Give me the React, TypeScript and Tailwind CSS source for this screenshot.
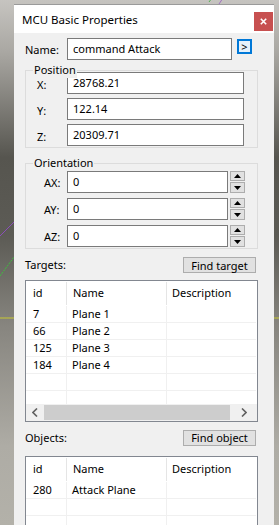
import React from "react";

type Row = { id: string; name: string; desc: string };

const targets: Row[] = [
  { id: "7", name: "Plane 1", desc: "" },
  { id: "66", name: "Plane 2", desc: "" },
  { id: "125", name: "Plane 3", desc: "" },
  { id: "184", name: "Plane 4", desc: "" },
  { id: "", name: "", desc: "" },
  { id: "", name: "", desc: "" },
];

const objects: Row[] = [
  { id: "280", name: "Attack Plane", desc: "" },
  { id: "", name: "", desc: "" },
  { id: "", name: "", desc: "" },
];

function TextBox({ value, width }: { value: string; width: string }) {
  return (
    <div
      className={`${width} h-[22px] shrink-0 border border-[#7a7a7a] bg-white pl-[5px] flex items-center text-black`}
    >
      {value}
    </div>
  );
}

function Spinner() {
  return (
    <div className="ml-[2px] flex flex-col gap-[1px]">
      <div className="w-[15px] h-[10px] border border-[#adadad] bg-[#e1e1e1] flex items-center justify-center">
        <svg width="7" height="4" viewBox="0 0 7 4">
          <path d="M0 4 L3.5 0 L7 4 Z" fill="#000" />
        </svg>
      </div>
      <div className="w-[15px] h-[11px] border border-[#adadad] bg-[#e1e1e1] flex items-center justify-center">
        <svg width="7" height="4" viewBox="0 0 7 4">
          <path d="M0 0 L7 0 L3.5 4 Z" fill="#000" />
        </svg>
      </div>
    </div>
  );
}

function GroupBox({ title, children, cls }: { title: string; children: React.ReactNode; cls: string }) {
  return (
    <div className={`relative border border-[#dcdcdc] ${cls}`}>
      <span className="absolute left-[7px] top-[-9px] bg-[#f0f0f0] px-[1px] leading-[16px]">{title}</span>
      {children}
    </div>
  );
}

function Rows({ rows }: { rows: Row[] }) {
  return (
    <>
      <div className="h-[25px] shrink-0 flex items-center">
        <div className="w-[41px] h-[23px] border-r border-[#e5e5e5] pl-[7px] flex items-center">id</div>
        <div className="w-[100px] h-[23px] border-r border-[#e5e5e5] pl-[6px] flex items-center">Name</div>
        <div className="w-[89px] h-[23px] pl-[5px] flex items-center">Description</div>
      </div>
      <div className="flex-1 overflow-hidden">
        {rows.map((r, i) => (
          <div key={i} className="h-[17px] w-[230px] flex border-b border-[#f0f0f0]">
            <div className="w-[41px] border-r border-[#f0f0f0] pl-[7px] leading-[16px]">{r.id}</div>
            <div className="w-[100px] border-r border-[#f0f0f0] pl-[5px] leading-[16px]">{r.name}</div>
            <div className="w-[89px] pl-[5px] leading-[16px]">{r.desc}</div>
          </div>
        ))}
      </div>
    </>
  );
}

function HScroll() {
  return (
    <div className="h-[17px] shrink-0 bg-[#f0f0f0] flex items-center">
      <div className="w-[17px] h-[17px] flex items-center justify-center">
        <svg width="6" height="9" viewBox="0 0 6 9">
          <path d="M5 0.5 L1 4.5 L5 8.5" stroke="#606060" strokeWidth="1.6" fill="none" />
        </svg>
      </div>
      <div className="ml-[1px] w-[186px] h-[15px] bg-[#cdcdcd]" />
      <div className="flex-1 h-[17px] flex items-center justify-center">
        <svg width="6" height="9" viewBox="0 0 6 9">
          <path d="M1 0.5 L5 4.5 L1 8.5" stroke="#606060" strokeWidth="1.6" fill="none" />
        </svg>
      </div>
    </div>
  );
}

function Backdrop() {
  return (
    <svg className="absolute inset-0" width="279" height="525" viewBox="0 0 279 525">
      <line x1="0" y1="236" x2="14" y2="222" stroke="#8a4fb8" strokeWidth="1" />
      <line x1="0" y1="276" x2="14" y2="257" stroke="#3fbf3f" strokeWidth="1" strokeDasharray="2 1" />
      <line x1="0" y1="318" x2="14" y2="318" stroke="#c8c832" strokeWidth="1" />
      <line x1="274" y1="318" x2="279" y2="318" stroke="#c8c832" strokeWidth="1" />
      <line x1="209" y1="2" x2="212" y2="-2" stroke="#55b055" strokeWidth="1" />
      <line x1="219" y1="4" x2="223" y2="-2" stroke="#a070c0" strokeWidth="1" />
    </svg>
  );
}

export default function App() {
  return (
    <div className="relative w-[279px] h-[525px] overflow-hidden bg-[linear-gradient(180deg,#c6c4c0_0%,#a9a7a2_10%,#56554f_30%,#5c5b55_45%,#87857f_62%,#aeaca5_85%,#b3b1a9_100%)] font-['Noto_Sans',sans-serif] text-[11px] text-black">
      <Backdrop />
      <div className="relative ml-[14px] mt-[4px] w-[260px] h-[521px] border-t border-[#9a9a9a] bg-[#f0f0f0] flex flex-col">
        <div className="h-[28px] shrink-0 bg-white flex justify-between">
          <span className="pl-[8px] pt-[6px] text-[11.5px]">MCU Basic Properties</span>
          <div className="self-end mb-[2px] mr-[1px] w-[19px] h-[19px] bg-[#c75050] flex items-center justify-center">
            <svg width="7" height="7" viewBox="0 0 7 7">
              <path d="M0.8 0.8 L6.2 6.2 M6.2 0.8 L0.8 6.2" stroke="#fff" strokeWidth="1.6" />
            </svg>
          </div>
        </div>

        <div className="pl-[11px] pr-[16px] flex flex-col">
          <div className="mt-[5px] flex items-start">
            <span className="w-[42px] pt-[4px]">Name:</span>
            <TextBox value="command Attack" width="w-[165px]" />
            <div className="ml-[5px] mt-[1px] w-[15px] h-[15px] border-2 border-[#0078d7] bg-[#e5f1fb] flex items-center justify-center text-[11px] leading-none">
              &gt;
            </div>
          </div>

          <GroupBox title="Position" cls="mt-[10px] h-[78px] pt-[1px]">
            <div className="flex flex-col gap-[4px]">
              {[
                ["X:", "28768.21"],
                ["Y:", "122.14"],
                ["Z:", "20309.71"],
              ].map(([l, v]) => (
                <div key={l} className="flex items-center">
                  <span className="w-[41px] pl-[11px] pt-[5px]">{l}</span>
                  <TextBox value={v} width="w-[177px]" />
                </div>
              ))}
            </div>
          </GroupBox>

          <GroupBox title="Orientation" cls="mt-[15px] h-[86px] pt-[7px]">
            <div className="flex flex-col gap-[5px]">
              {["AX:", "AY:", "AZ:"].map((l) => (
                <div key={l} className="flex items-start">
                  <span className="w-[41px] pl-[18px] pt-[4px]">{l}</span>
                  <TextBox value="0" width="w-[161px]" />
                  <Spinner />
                </div>
              ))}
            </div>
          </GroupBox>

          <div className="mt-[8px] mb-[6px] flex items-center justify-between">
            <span>Targets:</span>
            <div className="mr-[2px] w-[73px] h-[16px] border border-[#adadad] bg-[#e1e1e1] flex items-center justify-center leading-none">
              Find target
            </div>
          </div>

          <div className="border border-[#828790] bg-white h-[142px] flex flex-col">
            <Rows rows={targets} />
            <HScroll />
          </div>

          <div className="mt-[8px] mb-[10px] flex items-center justify-between">
            <span>Objects:</span>
            <div className="mr-[2px] w-[73px] h-[16px] border border-[#adadad] bg-[#e1e1e1] flex items-center justify-center leading-none">
              Find object
            </div>
          </div>

          <div className="border border-[#828790] bg-white h-[90px] flex flex-col">
            <Rows rows={objects} />
          </div>
        </div>
      </div>
    </div>
  );
}
